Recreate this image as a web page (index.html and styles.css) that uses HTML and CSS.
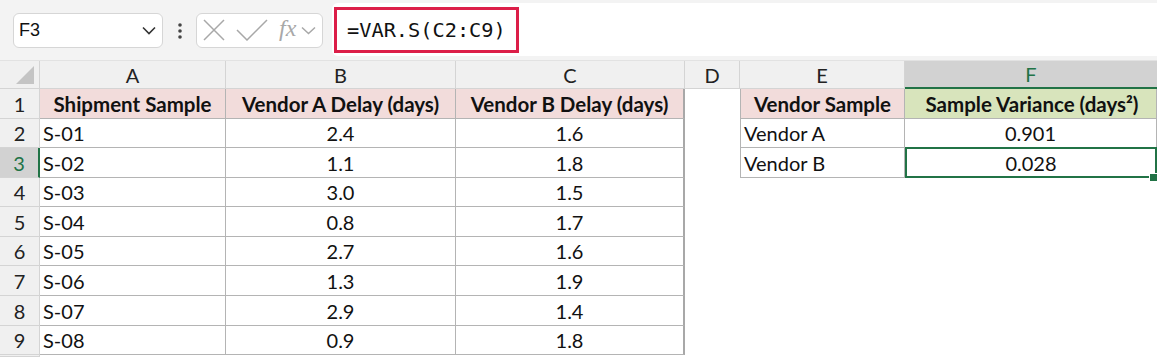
FILE: index.html
```html
<!DOCTYPE html>
<html lang="en">
<head>
    <meta charset="UTF-8">
    <title>VAR.S vendor delays</title>
    <link rel="stylesheet" href="styles.css">
</head>
<body>
    <!-- formula bar -->
    <div class="toolbar">
        <div class="name-box">
            <span>F3</span>
            <svg class="chev" width="14" height="9" viewBox="0 0 14 9"><path d="M1 1.5 L7 7.5 L13 1.5" fill="none" stroke="#333" stroke-width="1.6"/></svg>
        </div>
        <div class="dots">
            <svg width="6" height="20" viewBox="0 0 6 20"><circle cx="3" cy="4" r="1.8" fill="#444"/><circle cx="3" cy="10" r="1.8" fill="#444"/><circle cx="3" cy="16" r="1.8" fill="#444"/></svg>
        </div>
        <div class="fx-box">
            <svg width="22" height="22" viewBox="0 0 22 22"><path d="M1 1 L21 21 M21 1 L1 21" stroke="#a8a8a8" stroke-width="1.5" fill="none"/></svg>
            <svg width="32" height="22" viewBox="0 0 32 22"><path d="M1 11 L11 21 L31 1" stroke="#a8a8a8" stroke-width="1.5" fill="none"/></svg>
            <span class="fx">fx</span>
            <svg width="15" height="9" viewBox="0 0 15 9"><path d="M1 1.5 L7.5 7.5 L14 1.5" fill="none" stroke="#a8a8a8" stroke-width="1.5"/></svg>
        </div>
        <div class="formula">
            <div class="formula-text">=VAR.S(C2:C9)</div>
        </div>
    </div>

    <!-- grid -->
    <div class="sheet">
        <div class="row col-heads">
            <div class="corner"><svg width="20" height="20" viewBox="0 0 20 20"><path d="M19 1 L19 19 L1 19 Z" fill="#c4c4c4"/></svg></div>
            <div class="ch">A</div>
            <div class="ch">B</div>
            <div class="ch">C</div>
            <div class="ch">D</div>
            <div class="ch">E</div>
            <div class="ch sel">F</div>
        </div>

        <div class="row r30">
            <div class="rh">1</div>
            <div class="c b hd">Shipment Sample</div>
            <div class="c b hd">Vendor A Delay (days)</div>
            <div class="c b hd last">Vendor B Delay (days)</div>
            <div class="c"></div>
            <div class="c b hd bl">Vendor Sample</div>
            <div class="c b hg">Sample Variance (days²)</div>
        </div>
        <div class="row r29">
            <div class="rh">2</div>
            <div class="c b">S-01</div>
            <div class="c b num">2.4</div>
            <div class="c b num last">1.6</div>
            <div class="c"></div>
            <div class="c b bl">Vendor A</div>
            <div class="c b num">0.901</div>
        </div>
        <div class="row r30">
            <div class="rh sel">3</div>
            <div class="c b">S-02</div>
            <div class="c b num">1.1</div>
            <div class="c b num last">1.8</div>
            <div class="c"></div>
            <div class="c b bl">Vendor B</div>
            <div class="c b num active">0.028<span class="handle"></span></div>
        </div>
        <div class="row r29">
            <div class="rh">4</div>
            <div class="c b">S-03</div>
            <div class="c b num">3.0</div>
            <div class="c b num last">1.5</div>
        </div>
        <div class="row r30">
            <div class="rh">5</div>
            <div class="c b">S-04</div>
            <div class="c b num">0.8</div>
            <div class="c b num last">1.7</div>
        </div>
        <div class="row r29">
            <div class="rh">6</div>
            <div class="c b">S-05</div>
            <div class="c b num">2.7</div>
            <div class="c b num last">1.6</div>
        </div>
        <div class="row r30">
            <div class="rh">7</div>
            <div class="c b">S-06</div>
            <div class="c b num">1.3</div>
            <div class="c b num last">1.9</div>
        </div>
        <div class="row r30">
            <div class="rh">8</div>
            <div class="c b">S-07</div>
            <div class="c b num">2.9</div>
            <div class="c b num last">1.4</div>
        </div>
        <div class="row r29">
            <div class="rh">9</div>
            <div class="c b">S-08</div>
            <div class="c b num">0.9</div>
            <div class="c b num last">1.8</div>
        </div>
        <div class="row stub">
            <div class="rh"></div>
        </div>
    </div>
</body>
</html>
```

FILE: styles.css
```css
body {
    margin: 0;
    font-family: Lato, "Open Sans", sans-serif;
    background: #ffffff;
    width: 1157px;
    height: 357px;
    overflow: hidden;
}

/* formula bar */
.toolbar {
    height: 61px;
    background: #f3f3f3;
    display: flex;
    align-items: center;
    box-sizing: border-box;
    padding-left: 13px;
    border-bottom: 1px solid #e2e2e2;
}
.name-box {
    width: 150px;
    height: 35px;
    box-sizing: border-box;
    background: #ffffff;
    border: 1px solid #d6d6d6;
    border-radius: 6px;
    display: flex;
    align-items: center;
    justify-content: space-between;
    padding: 0 6px 0 5px;
    font-family: "Liberation Sans", Arial, sans-serif;
    font-size: 18px;
    color: #111;
}
.dots {
    width: 33px;
    display: flex;
    justify-content: center;
    padding-top: 2px;
}
.fx-box {
    width: 127px;
    height: 35px;
    box-sizing: border-box;
    background: #ffffff;
    border: 1px solid #d6d6d6;
    border-radius: 6px;
    display: flex;
    align-items: center;
    gap: 11px;
    padding-left: 6px;
}
.fx-box .fx {
    font-family: "Liberation Serif", serif;
    font-style: italic;
    font-size: 24px;
    color: #a8a8a8;
    margin-right: -6px;
    margin-top: -3px;
}
.formula {
    flex: 1;
    align-self: stretch;
    margin: 3px 0 4px 9px;
    background: #ffffff;
    border-radius: 6px 0 0 6px;
    display: flex;
    align-items: center;
}
.formula-text {
    margin-left: 2px;
    height: 46px;
    box-sizing: border-box;
    border: 3px solid #dc1e48;
    padding: 0 10px 0 10px;
    display: flex;
    align-items: center;
    font-family: "DejaVu Sans Mono", "Liberation Mono", monospace;
    font-size: 20.3px;
    color: #111;
}

/* sheet grid */
.row {
    display: grid;
    grid-template-columns: 40px 186px 230px 229px 55px 165px 252px;
}
.col-heads {
    height: 28px;
    background: #f0f0f0;
}
.r29 { height: 29px; }
.r30 { height: 30px; }
.stub { height: 2px; overflow: hidden; }

.corner {
    border-right: 1px solid #d4d4d4;
    border-bottom: 1px solid #d4d4d4;
    display: flex;
    align-items: flex-end;
    justify-content: flex-end;
    padding: 0 4px 3px 0;
}
.ch {
    border-right: 1px solid #d4d4d4;
    border-bottom: 1px solid #d4d4d4;
    display: flex;
    align-items: center;
    justify-content: center;
    font-size: 20px;
    color: #222;
}
.ch.sel {
    background: #d2d2d2;
    color: #217346;
    border-bottom: 2px solid #217346;
    border-right: none;
}
.rh {
    background: #f0f0f0;
    border-right: 1px solid #d4d4d4;
    border-bottom: 1px solid #d4d4d4;
    display: flex;
    align-items: center;
    justify-content: center;
    font-size: 20px;
    color: #222;
    box-sizing: border-box;
}
.rh.sel {
    background: #d2d2d2;
    color: #217346;
    border-right: 2px solid #217346;
}

.c {
    display: flex;
    align-items: center;
    padding-left: 3px;
    font-size: 20px;
    color: #111;
    white-space: nowrap;
    box-sizing: border-box;
}
.b {
    border-right: 1px solid #b4b4b4;
    border-bottom: 1px solid #b4b4b4;
}
.b.last { border-right: 2px solid #a8a8a8; }
.b.bl { border-left: 1px solid #b4b4b4; }
.num {
    justify-content: center;
    padding-left: 0;
}
.hd {
    background: #f2dcdb;
    font-weight: bold;
    font-size: 20.5px;
    justify-content: center;
    padding-left: 0;
}
.hg {
    background: #d8e4bc;
    font-weight: bold;
    font-size: 20.5px;
    justify-content: center;
}

.active {
    position: relative;
    border: 2px solid #217346;
    margin-top: -1px;
}
.handle {
    position: absolute;
    right: -2px;
    bottom: -5px;
    width: 7px;
    height: 7px;
    background: #217346;
    border-left: 1px solid #fff;
    border-top: 1px solid #fff;
}
```
